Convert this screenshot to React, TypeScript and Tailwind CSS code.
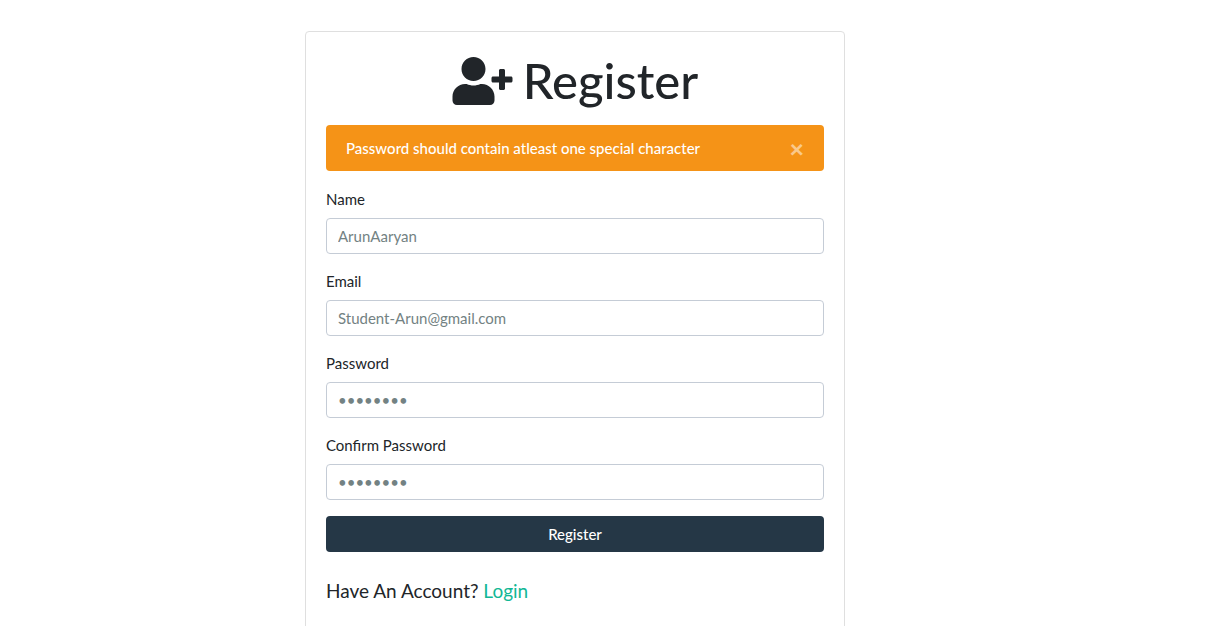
import { FaUserPlus } from "react-icons/fa";

const fields = [
  { id: "name", label: "Name", type: "text", placeholder: "ArunAaryan" },
  { id: "email", label: "Email", type: "email", placeholder: "Student-Arun@gmail.com" },
  { id: "password", label: "Password", type: "password", placeholder: "••••••••" },
  { id: "confirm", label: "Confirm Password", type: "password", placeholder: "••••••••" },
];

export default function App() {
  return (
    <main className="flex h-screen justify-center overflow-hidden bg-white pr-[58px] pt-[31px] font-['Lato',sans-serif] text-[15px] leading-[22px] text-[#212529]">
      <section className="h-fit w-full max-w-[540px] rounded border border-[#dfdfdf] p-5 pb-10">
        <h1 className="mb-4 flex items-center justify-center gap-2.5 text-[49px] font-medium leading-[57px]">
          <FaUserPlus className="h-12 w-[61px]" />
          Register
        </h1>
        <div role="alert" className="mb-[17px] flex h-[46px] items-center justify-between rounded bg-[#f59317] px-5 font-medium text-white">
          <span>Password should contain atleast one special character</span>
          <button type="button" aria-label="Close" className="text-[25px] font-black leading-none text-white/50">×</button>
        </div>
        <form>
          {fields.map((f) => (
            <div key={f.id} className="mb-4">
              <label htmlFor={f.id} className="mb-2 block">{f.label}</label>
              <input
                id={f.id}
                type={f.type}
                placeholder={f.placeholder}
                className="block h-9 w-full rounded border border-[#c5ccd6] px-[11px] placeholder:text-[#738283]"
              />
            </div>
          ))}
          <button type="submit" className="block h-9 w-full rounded bg-[#253746] font-medium text-white">Register</button>
        </form>
        <p className="mt-[25px] text-[19px] leading-7">
          Have An Account? <a href="#login" className="text-[#12b795]">Login</a>
        </p>
      </section>
    </main>
  );
}
